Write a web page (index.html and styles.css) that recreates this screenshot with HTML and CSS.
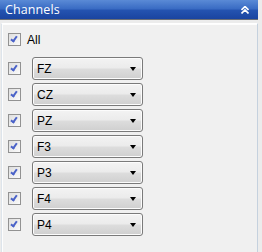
FILE: index.html
```html
<!DOCTYPE html>
<html lang="en">
<head>
    <meta charset="UTF-8">
    <title>Channels</title>
    <link rel="stylesheet" href="styles.css">
</head>
<body>
    <div class="pane">
        <div class="pane-header">
            <span class="pane-title">Channels</span>
            <svg class="collapse-icon" width="8" height="8" viewBox="0 0 8 8">
                <path d="M0.5 4 L4 0.5 L7.5 4 M0.5 7.5 L4 4 L7.5 7.5" fill="none" stroke="#fff" stroke-width="1.6"/>
            </svg>
        </div>

        <div class="pane-body">
            <label class="all-row">
                <span class="check"></span>
                <span>All</span>
            </label>

            <!-- one row per channel -->
            <div class="channel-row">
                <span class="check"></span>
                <div class="combo"><span>FZ</span><span class="arrow"></span></div>
            </div>
            <div class="channel-row">
                <span class="check"></span>
                <div class="combo"><span>CZ</span><span class="arrow"></span></div>
            </div>
            <div class="channel-row">
                <span class="check"></span>
                <div class="combo"><span>PZ</span><span class="arrow"></span></div>
            </div>
            <div class="channel-row">
                <span class="check"></span>
                <div class="combo"><span>F3</span><span class="arrow"></span></div>
            </div>
            <div class="channel-row">
                <span class="check"></span>
                <div class="combo"><span>P3</span><span class="arrow"></span></div>
            </div>
            <div class="channel-row">
                <span class="check"></span>
                <div class="combo"><span>F4</span><span class="arrow"></span></div>
            </div>
            <div class="channel-row">
                <span class="check"></span>
                <div class="combo"><span>P4</span><span class="arrow"></span></div>
            </div>
        </div>
    </div>
</body>
</html>
```

FILE: styles.css
```css
body {
    margin: 0;
    background-color: #ececec;
    font-family: "DejaVu Sans", Tahoma, sans-serif;
    font-size: 11px;
    color: #000;
}

.pane {
    width: 258px;
    height: 252px;
    display: flex;
    flex-direction: column;
}

.pane-header {
    height: 19px;
    background: linear-gradient(to bottom, #5a8ad6 0%, #3a6cc4 45%, #2453b0 55%, #1a44a0 100%);
    border-bottom: 1px solid #6b6f76;
    display: flex;
    align-items: center;
    justify-content: space-between;
    padding: 0 9px 0 5px;
}

.pane-title {
    color: #fff;
    font-family: "Open Sans", "DejaVu Sans", sans-serif;
    font-size: 12.5px;
    letter-spacing: 0.1px;
}

.collapse-icon {
    display: block;
}

.pane-body {
    flex: 1;
    margin: 3px 0 0 1px;
    background-color: #f0f0f0;
    border: 1px solid #fff;
    border-left-color: #dde4eb;
    border-right-color: #c5d1de;
    border-bottom: none;
    box-shadow: inset 1px 1px 0 #fdfdfd;
    padding: 9px 0 0 6px;
}

.check {
    width: 11px;
    height: 11px;
    border: 1px solid #929292;
    background: linear-gradient(to bottom right, #dedede, #fbfbfb);
    position: relative;
    flex: none;
}

.check::after {
    content: "";
    position: absolute;
    left: 3px;
    top: 1px;
    width: 2px;
    height: 5px;
    border: solid #4a62c8;
    border-width: 0 2px 2px 0;
    transform: rotate(35deg);
}

.all-row {
    display: flex;
    align-items: center;
    gap: 6px;
    height: 13px;
    font-size: 12px;
    font-family: "Liberation Sans", Arial, sans-serif;
    margin-bottom: 11px;
}

.channel-row {
    display: flex;
    align-items: center;
    gap: 11px;
    margin-bottom: 3px;
}

.combo {
    box-sizing: border-box;
    width: 111px;
    height: 23px;
    border: 1px solid #7a7a7a;
    border-radius: 3px;
    background: linear-gradient(to bottom, #f3f3f3 0%, #ebebeb 48%, #dddddd 52%, #cfcfcf 100%);
    box-shadow: inset 0 0 0 1px #fcfcfc;
    display: flex;
    align-items: center;
    justify-content: space-between;
    padding: 0 6px 0 4px;
    font-family: "Liberation Sans", Arial, sans-serif;
    font-size: 12px;
}

.arrow {
    width: 0;
    height: 0;
    border-left: 3.5px solid transparent;
    border-right: 3.5px solid transparent;
    border-top: 4px solid #000;
}
```
